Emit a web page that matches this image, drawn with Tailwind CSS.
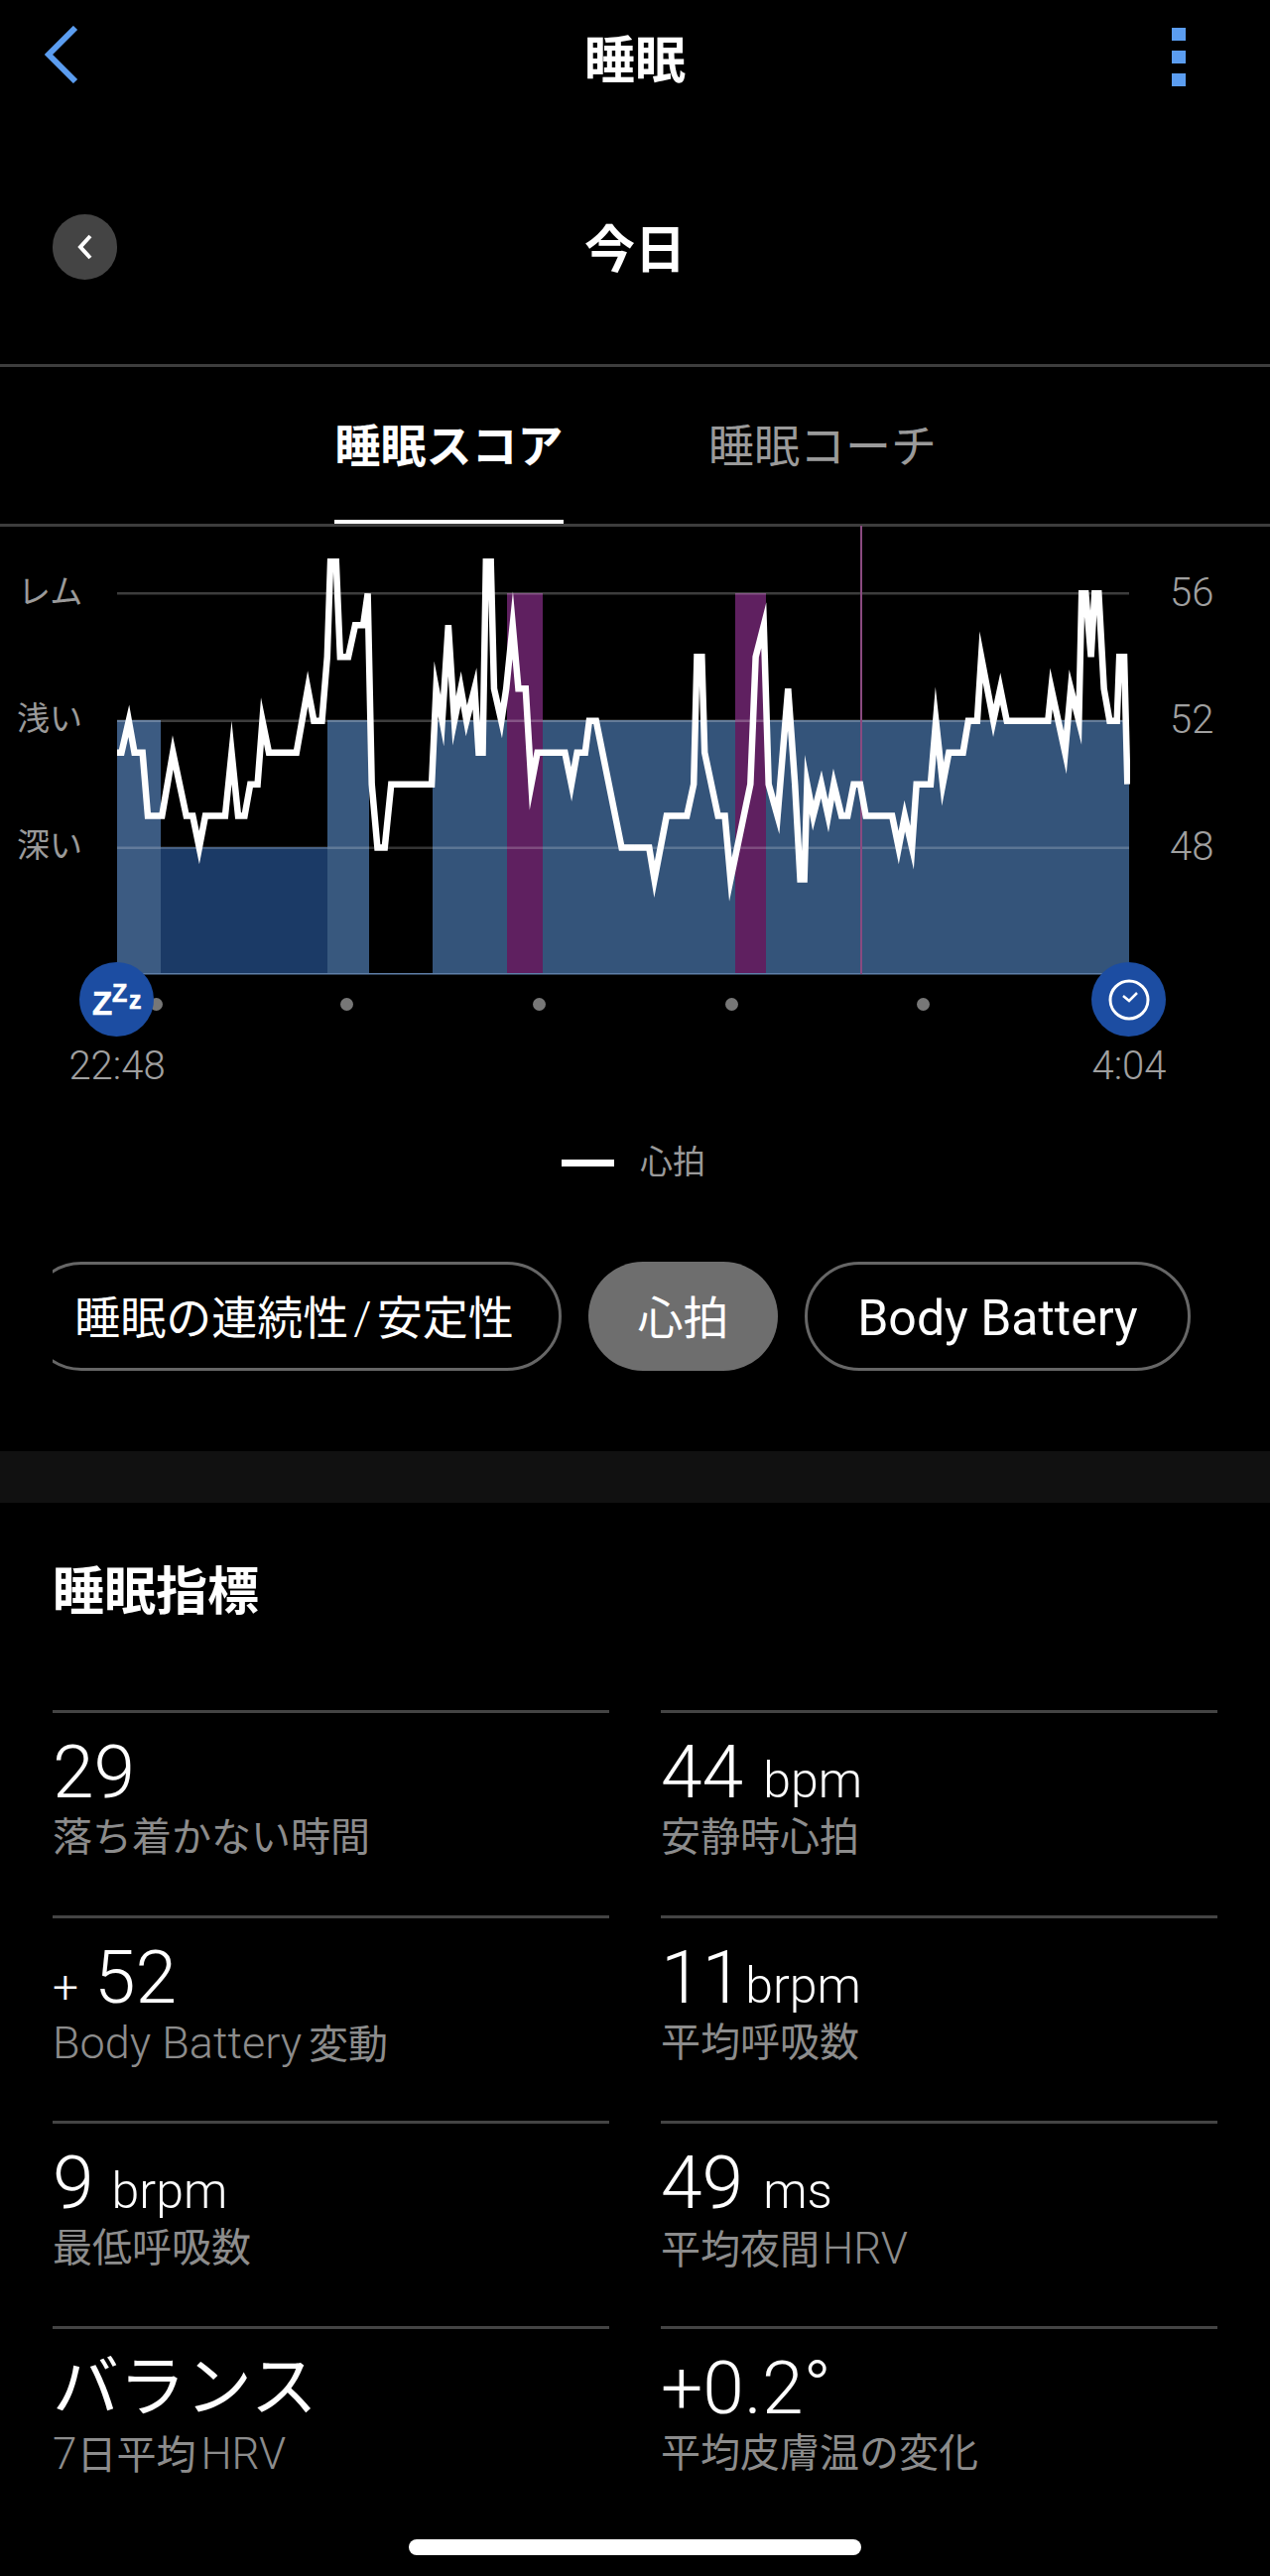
<!DOCTYPE html>
<html lang="ja">
<head>
  <meta charset="UTF-8">
  <meta name="viewport" content="width=device-width, initial-scale=1.0">
  <title>睡眠</title>
  <script src="https://cdn.jsdelivr.net/npm/@tailwindcss/browser@4"></script>
</head>
<body class="bg-black text-white font-['Roboto','Noto_Sans_CJK_JP',sans-serif]">
  <div class="relative w-[1280px] h-[2597px] overflow-hidden bg-black">

    <!-- top bar -->
    <header class="relative h-[118px] flex items-center justify-between pl-[45px] pr-[85px]">
      <svg width="34" height="58" viewBox="0 0 34 58" fill="none" class="-mt-[8px]">
        <path d="M31 2 L4 29 L31 56" stroke="#5b9df0" stroke-width="6" stroke-linejoin="miter"/>
      </svg>
      <h1 class="absolute left-0 right-0 top-[3px] text-center text-[51px] leading-[118px] font-bold">睡眠</h1>
      <div class="flex flex-col gap-[10px] -mt-[4px]">
        <div class="w-[14px] h-[13px] bg-[#5b9df0]"></div>
        <div class="w-[14px] h-[13px] bg-[#5b9df0]"></div>
        <div class="w-[14px] h-[13px] bg-[#5b9df0]"></div>
      </div>
    </header>

    <!-- date row -->
    <div class="relative h-[252px] border-b-[3px] border-[#3d3d3d] pl-[53px] pt-[98px]">
      <div class="w-[65px] h-[66px] rounded-full bg-[#444444] flex items-center justify-center">
        <svg width="18" height="26" viewBox="0 0 18 26" fill="none">
          <path d="M14 2 L4 13 L14 24" stroke="#ffffff" stroke-width="4"/>
        </svg>
      </div>
      <div class="absolute left-0 right-0 top-[105px] text-center text-[51px] leading-[60px] font-bold">今日</div>
    </div>

    <!-- tabs -->
    <nav class="h-[161px] -mb-[1px] border-b-[3px] border-[#3d3d3d] flex pl-[337px]">
      <div class="relative w-[231px] h-[158px] text-center text-[46px] leading-[160px] font-bold">
        睡眠スコア
        <div class="absolute left-0 right-0 bottom-0 h-[4px] bg-white"></div>
      </div>
      <div class="ml-[146px] text-[46px] leading-[160px] text-[#9a9a9a]">睡眠コーチ</div>
    </nav>

    <!-- chart -->
    <section class="relative h-[570px]">
      <svg class="absolute left-0 top-0" width="1280" height="570" viewBox="0 530 1280 570" fill="none">
        <defs>
          <clipPath id="plot"><rect x="118" y="530" width="1021" height="500"/></clipPath>
        </defs>
        <rect x="118" y="726" width="44" height="256" fill="#3c5b82"/>
        <rect x="162" y="854" width="168" height="128" fill="#1b3a66"/>
        <rect x="330" y="726" width="42" height="256" fill="#38587e"/>
        <rect x="436" y="726" width="702" height="256" fill="#34547a"/>
        <rect x="511" y="598" width="36" height="384" fill="#5f2060"/>
        <rect x="741" y="598" width="31" height="384" fill="#5f2060"/>
        <rect x="118" y="597" width="1020" height="2.5" fill="#ffffff" fill-opacity="0.24"/>
        <rect x="118" y="725.5" width="1020" height="2.5" fill="#ffffff" fill-opacity="0.24"/>
        <rect x="118" y="853.5" width="1020" height="2.5" fill="#ffffff" fill-opacity="0.2"/>
        <rect x="118" y="981" width="1020" height="1.5" fill="#5f7fa8"/>
        <rect x="867" y="530" width="2" height="452" fill="#8a4a80"/>
        <g clip-path="url(#plot)">
          <polyline transform="translate(0 530) scale(0.40816 0.3635)" vector-effect="non-scaling-stroke" stroke="#ffffff" stroke-width="6.5" stroke-miterlimit="12"
            points="289,629 300,629 318,541 332,629 352,629 365,805 400,805 427,629 460,805 476,805 492,893 507,805 556,805 572,629 588,805 604,805 618,717 636,717 648,541 664,629 732,629 760,452 775,541 795,541 808,364 816,100 830,100 840,364 860,364 877,276 897,276 908,188 918,717 932,893 950,893 966,717 1066,717 1077,452 1092,541 1107,276 1122,541 1138,452 1152,541 1172,452 1182,629 1192,629 1200,100 1212,100 1220,452 1238,541 1250,452 1266,276 1280,452 1298,452 1312,717 1327,629 1395,629 1411,717 1425,629 1445,629 1455,541 1472,541 1535,893 1568,893"/>
          <polyline transform="translate(640 530) scale(0.40816 0.3635)" vector-effect="non-scaling-stroke" stroke="#ffffff" stroke-width="6.5" stroke-miterlimit="12"
            points="0,893 35,893 48,981 78,805 128,805 145,717 153,364 165,364 172,629 205,805 222,805 236,981 285,717 298,364 318,276 330,717 352,805 378,452 395,717 408,981 418,981 425,717 440,805 460,717 477,805 491,717 510,805 525,805 540,717 556,717 570,805 635,805 651,893 666,805 684,893 695,717 730,717 743,541 760,717 775,629 810,629 823,541 845,541 855,364 885,541 902,452 918,541 1020,541 1028,452 1062,629 1076,452 1096,541 1103,188 1113,188 1126,364 1135,188 1145,188 1158,452 1172,541 1190,541 1196,364 1208,364 1216,717"/>
        </g>
      </svg>

      <!-- stage labels -->
      <span class="absolute left-[18px] top-[47px] text-[33px] leading-[40px] text-[#9a9a9a]">レム</span>
      <span class="absolute left-[17px] top-[175px] text-[33px] leading-[40px] text-[#9a9a9a]">浅い</span>
      <span class="absolute left-[17px] top-[303px] text-[33px] leading-[40px] text-[#9a9a9a]">深い</span>

      <!-- heart rate axis -->
      <span class="absolute left-[1179px] top-[48px] text-[40px] leading-[40px] font-light text-[#a0a0a0]">56</span>
      <span class="absolute left-[1179px] top-[176px] text-[40px] leading-[40px] font-light text-[#a0a0a0]">52</span>
      <span class="absolute left-[1179px] top-[304px] text-[40px] leading-[40px] font-light text-[#a0a0a0]">48</span>

      <!-- hour ticks -->
      <div class="absolute left-[151px] top-[476px] w-[13px] h-[13px] rounded-full bg-[#777777]"></div>
      <div class="absolute left-[343px] top-[476px] w-[13px] h-[13px] rounded-full bg-[#777777]"></div>
      <div class="absolute left-[537px] top-[476px] w-[13px] h-[13px] rounded-full bg-[#777777]"></div>
      <div class="absolute left-[731px] top-[476px] w-[13px] h-[13px] rounded-full bg-[#777777]"></div>
      <div class="absolute left-[924px] top-[476px] w-[13px] h-[13px] rounded-full bg-[#777777]"></div>

      <!-- sleep start marker -->
      <div class="absolute left-[80px] top-[440px] w-[75px] h-[75px] rounded-full bg-[#1c4da2]">
        <svg width="75" height="75" viewBox="0 0 75 75" fill="#ffffff" stroke="#ffffff" stroke-width="0.6" font-family="Liberation Sans" font-weight="700">
          <text x="13" y="53" font-size="33">Z</text>
          <text x="33" y="40" font-size="25">Z</text>
          <text x="50" y="47" font-size="25">z</text>
        </svg>
      </div>
      <!-- wake marker -->
      <div class="absolute left-[1100px] top-[440px] w-[75px] h-[75px] rounded-full bg-[#1c4da2] flex items-center justify-center">
        <svg width="44" height="44" viewBox="0 0 44 44" fill="none" stroke="#ffffff">
          <circle cx="22" cy="22" r="19" stroke-width="3"/>
          <path d="M16 18 L22 23 L30 15" stroke-width="2.5"/>
        </svg>
      </div>

      <span class="absolute left-[58px] top-[525px] w-[120px] text-center text-[40px] leading-[40px] font-light text-[#a0a0a0]">22:48</span>
      <span class="absolute left-[1078px] top-[525px] w-[120px] text-center text-[40px] leading-[40px] font-light text-[#a0a0a0]">4:04</span>
    </section>

    <!-- legend -->
    <div class="flex items-center h-[40px] mt-[52px] pl-[566px]">
      <div class="w-[53px] h-[7px] bg-white"></div>
      <span class="ml-[26px] text-[33px] leading-[40px] text-[#9a9a9a]">心拍</span>
    </div>

    <!-- metric pills -->
    <div class="ml-[53px] mt-[80px] h-[110px] flex gap-[27px] overflow-hidden">
      <div class="shrink-0 -ml-[26px] w-[539px] h-[110px] rounded-full border-[3px] border-[#666666] flex items-center justify-center pt-[5px] text-[46px] whitespace-nowrap">睡眠の連続性<span class="mx-[5px] font-light">/</span>安定性</div>
      <div class="shrink-0 w-[191px] h-[110px] rounded-full bg-[#6e6e6e] flex items-center justify-center pt-[5px] text-[46px]">心拍</div>
      <div class="shrink-0 w-[389px] h-[110px] rounded-full border-[3px] border-[#666666] flex items-center justify-center pt-[5px] text-[50px] whitespace-nowrap">Body Battery</div>
    </div>

    <div class="mt-[81px] h-[52px] bg-[#111111]"></div>

    <!-- sleep metrics -->
    <h2 class="mt-[61px] pl-[53px] text-[52px] leading-[60px] font-bold">睡眠指標</h2>

    <div class="mt-[88px] px-[53px] grid grid-cols-2 gap-x-[52px]">
      <div class="h-[207px] border-t-[3px] border-[#444444]">
        <div class="h-[110px] pt-[4px] text-[75px] leading-[110px] font-light">29</div>
        <div class="pt-[2px] text-[40px] leading-[28px] text-[#8c8c8c]">落ち着かない時間</div>
      </div>
      <div class="h-[207px] border-t-[3px] border-[#444444]">
        <div class="h-[110px] pt-[4px] text-[75px] leading-[110px] font-light">44<span class="ml-[20px] text-[50px]">bpm</span></div>
        <div class="pt-[2px] text-[40px] leading-[28px] text-[#8c8c8c]">安静時心拍</div>
      </div>
      <div class="h-[207px] border-t-[3px] border-[#444444]">
        <div class="h-[110px] pt-[4px] text-[75px] leading-[110px] font-light"><span class="mr-[16px] text-[46px]">+</span>52</div>
        <div class="pt-[2px] text-[40px] leading-[28px] text-[#8c8c8c]"><span class="text-[45px] font-light">Body Battery</span><span class="ml-[7px]">変動</span></div>
      </div>
      <div class="h-[207px] border-t-[3px] border-[#444444]">
        <div class="h-[110px] pt-[4px] text-[75px] leading-[110px] font-light">11<span class="ml-[2px] text-[50px]">brpm</span></div>
        <div class="pt-[2px] text-[40px] leading-[28px] text-[#8c8c8c]">平均呼吸数</div>
      </div>
      <div class="h-[207px] border-t-[3px] border-[#444444]">
        <div class="h-[110px] pt-[4px] text-[75px] leading-[110px] font-light">9<span class="ml-[18px] text-[50px]">brpm</span></div>
        <div class="pt-[2px] text-[40px] leading-[28px] text-[#8c8c8c]">最低呼吸数</div>
      </div>
      <div class="h-[207px] border-t-[3px] border-[#444444]">
        <div class="h-[110px] pt-[4px] text-[75px] leading-[110px] font-light">49<span class="ml-[20px] text-[50px]">ms</span></div>
        <div class="pt-[2px] text-[40px] leading-[28px] text-[#8c8c8c]">平均夜間<span class="ml-[3px] text-[44px] font-light">HRV</span></div>
      </div>
      <div class="h-[207px] border-t-[3px] border-[#444444]">
        <div class="h-[110px] pt-[4px] text-[67px] leading-[110px]">バランス</div>
        <div class="pt-[2px] text-[40px] leading-[28px] text-[#8c8c8c]"><span class="text-[44px] font-light">7</span>日平均<span class="ml-[5px] text-[44px] font-light">HRV</span></div>
      </div>
      <div class="h-[207px] border-t-[3px] border-[#444444]">
        <div class="h-[110px] pt-[4px] text-[75px] leading-[110px] font-light">+0.2°</div>
        <div class="pt-[2px] text-[40px] leading-[28px] text-[#8c8c8c]">平均皮膚温の変化</div>
      </div>
    </div>

    <!-- home indicator -->
    <div class="absolute left-[412px] top-[2560px] w-[456px] h-[16px] rounded-full bg-white"></div>
  </div>
</body>
</html>
